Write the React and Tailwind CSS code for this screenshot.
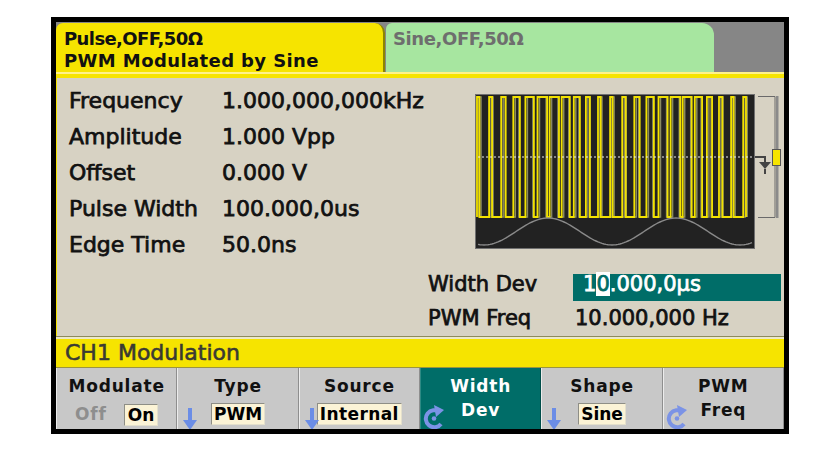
import React from "react";

const YELLOW = "#f6e400";

// PWM trace for the scope: pulse width follows the sine below it
function pwmPath(shrink) {
  const top = 3;
  const bottom = 123;
  const P = 12.1;
  let d = `M2 ${bottom}`;
  for (let i = 0; i < 24; i++) {
    const x0 = 2 + i * P;
    const m = Math.cos((2 * Math.PI * (x0 + P / 2 - 73)) / 128);
    const w = Math.max(2, P * (0.5 + 0.3 * m) - shrink);
    if (x0 > 277) break;
    d += ` L${x0.toFixed(1)} ${bottom} L${x0.toFixed(1)} ${top} L${Math.min(x0 + w, 278).toFixed(1)} ${top} L${Math.min(x0 + w, 278).toFixed(1)} ${bottom}`;
  }
  return d;
}

function sinePath() {
  let d = "";
  for (let x = 3; x <= 277; x += 2) {
    const y = 137.5 - 13.5 * Math.cos((2 * Math.PI * (x - 73)) / 128);
    d += `${x === 3 ? "M" : "L"}${x} ${y.toFixed(1)} `;
  }
  return d;
}

function Scope() {
  return (
    <svg width="308" height="160" viewBox="0 0 308 160">
      <rect x="0.5" y="0.5" width="279" height="154" fill="#222222" stroke="#707070" />
      <path d={pwmPath(3)} fill="none" stroke="#8a8a62" strokeWidth="1.5" transform="translate(2 0)" />
      <path d={pwmPath(0)} fill="none" stroke="#f2e200" strokeWidth="1.8" />
      <line x1="3" y1="63" x2="278" y2="63" stroke="#f0f0f0" strokeWidth="1" strokeDasharray="2 2" />
      <path d={sinePath()} fill="none" stroke="#8a8a8a" strokeWidth="1.4" />
      {/* scale bracket */}
      <path d="M283 2.5 H300 V123.5 H283" fill="none" stroke="#6a6a6a" strokeWidth="1" />
      <rect x="301" y="2" width="2.5" height="122" fill="#8a8a8a" />
      {/* offset / ground marker */}
      <path d="M280 63 H290 V68" fill="none" stroke="#444" strokeWidth="2" />
      <path d="M284 68 H296 L290 75 Z" fill="#444" />
      <line x1="290" y1="75" x2="290" y2="80" stroke="#444" strokeWidth="2" />
      <rect x="297.5" y="55.5" width="8" height="16" fill={YELLOW} stroke="#555" />
    </svg>
  );
}

function DownArrow() {
  return (
    <svg width="16" height="22" viewBox="0 0 16 22" className="absolute left-[4px] bottom-[-1px]">
      <rect x="6" y="0" width="4" height="13" fill="#6b8de6" />
      <path d="M1 12 H15 L8 22 Z" fill="#6b8de6" />
    </svg>
  );
}

function SpinArrow() {
  return (
    <svg width="28" height="28" viewBox="0 0 28 28" className="absolute left-[1px] bottom-[-1px]">
      <path d="M17.5 10 A8.5 8.5 0 1 0 19 22" fill="none" stroke="#7b93e6" strokeWidth="4" />
      <path d="M12 3 L22 8 L14 15 Z" fill="#7b93e6" />
      <circle cx="12" cy="16.5" r="2.3" fill="#7b93e6" />
    </svg>
  );
}

function ValueBox({ children, className = "" }) {
  return (
    <span className={`inline-block h-[22px] px-[2px] bg-[#fbf3d6] border border-t-[#8e8e86] border-l-[#8e8e86] border-r-[#e4e0cc] border-b-[#e4e0cc] leading-[20px] text-black ${className}`}>
      {children}
    </span>
  );
}

function SoftKey({ top, children, icon, active }) {
  return (
    <div
      className={`relative flex flex-col items-center pt-[8px] border-l border-r ${
        active ? "bg-[#006d68] text-white border-l-[#2d8a84] border-r-[#004e4a]" : "bg-[#c8c8c8] text-[#111] border-l-[#ececec] border-r-[#8e8e8e]"
      }`}
    >
      <div className="text-[17px] leading-[20px] font-bold tracking-[0.8px]">{top}</div>
      {children}
      {icon === "down" && <DownArrow />}
      {icon === "spin" && <SpinArrow />}
    </div>
  );
}

const params = [
  ["Frequency", "1.000,000,000kHz"],
  ["Amplitude", "1.000 Vpp"],
  ["Offset", "0.000 V"],
  ["Pulse Width", "100.000,0us"],
  ["Edge Time", "50.0ns"],
];

export default function App() {
  return (
    <div className="w-[813px] h-[455px] bg-white pt-[17px] pl-[51px] font-['DejaVu_Sans',Verdana,sans-serif]">
      <div className="w-[738px] h-[417px] border-[5px] border-black flex flex-col overflow-hidden">
        {/* channel tabs */}
        <div className="h-[56px] bg-[#868686] flex flex-col">
          <div className="flex h-[50px] pt-[1px]">
            <div className="w-[329px] bg-[#f6e400] rounded-tl-[7px] rounded-tr-[10px] border-r-2 border-[#8c8600] pl-[8px] pt-[5px] text-[18px] leading-[22px] font-bold text-[#111]">
              <div className="tracking-[-0.6px]">Pulse,OFF,50Ω</div>
              <div className="tracking-[0.4px]">PWM Modulated by Sine</div>
            </div>
            <div className="w-[328px] ml-px bg-[#a7e6a0] rounded-tl-[6px] rounded-tr-[12px] pl-[7px] pt-[5px] text-[18px] leading-[22px] font-bold tracking-[-0.4px] text-[#6e6e6e]">
              Sine,OFF,50Ω
            </div>
          </div>
          <div className="h-[6px] bg-[#f6e400] border-t-2 border-[#fff28a]" />
        </div>

        {/* main readout */}
        <div className="h-[258px] bg-[#d7d2c3] border-l border-[#f6e400] flex flex-col text-[#111] [-webkit-text-stroke:0.75px_currentcolor]">
          <div className="flex h-[184px]">
            <div className="w-[418px] pl-[12px] pt-[5px] grid grid-cols-[153px_auto] content-start text-[22px] leading-[36px]">
              {params.map(([label, value]) => (
                <React.Fragment key={label}>
                  <div>{label}</div>
                  <div>{value}</div>
                </React.Fragment>
              ))}
            </div>
            <div className="pt-[16px] [-webkit-text-stroke:0px]">
              <Scope />
            </div>
          </div>
          <div className="mt-[12px] pl-[371px] grid grid-cols-[145px_208px] gap-y-[7px] text-[21px] leading-[20px]">
            <div className="h-[27px]">Width Dev</div>
            <div className="h-[27px] bg-[#006d68] text-white pl-[10px]">
              1<span className="bg-white text-[#006d68]">0</span>.000,0μs
            </div>
            <div>PWM Freq</div>
            <div className="pl-[2px]">10.000,000 Hz</div>
          </div>
        </div>

        {/* menu title */}
        <div className="h-px bg-[#8d8a5c]" />
        <div className="h-[2px] bg-[#ece9c8]" />
        <div className="h-[29px] bg-[#f6e400] border-b border-[#9b9440] pl-[9px] text-[22px] leading-[28px] text-[#3a3a34] [-webkit-text-stroke:0.6px_currentcolor]">
          CH1 Modulation
        </div>

        {/* soft keys */}
        <div className="h-[61px] grid grid-cols-6">
          <SoftKey top="Modulate">
            <div className="mt-[6px] flex items-center gap-[17px] text-[17px] font-bold">
              <span className="text-[#8e8e8e] tracking-[0.8px]">Off</span>
              <ValueBox className="px-[3px]">On</ValueBox>
            </div>
          </SoftKey>
          <SoftKey top="Type" icon="down">
            <div className="mt-[6px] text-[17px] font-bold">
              <ValueBox>PWM</ValueBox>
            </div>
          </SoftKey>
          <SoftKey top="Source" icon="down">
            <div className="mt-[6px] text-[17px] font-bold tracking-[0.4px]">
              <ValueBox>Internal</ValueBox>
            </div>
          </SoftKey>
          <SoftKey top="Width" icon="spin" active>
            <div className="mt-[4px] text-[17px] leading-[20px] font-bold tracking-[0.8px]">Dev</div>
          </SoftKey>
          <SoftKey top="Shape" icon="down">
            <div className="mt-[6px] text-[17px] font-bold">
              <ValueBox>Sine</ValueBox>
            </div>
          </SoftKey>
          <SoftKey top="PWM" icon="spin">
            <div className="mt-[4px] text-[17px] leading-[20px] font-bold tracking-[0.8px]">Freq</div>
          </SoftKey>
        </div>
      </div>
    </div>
  );
}
